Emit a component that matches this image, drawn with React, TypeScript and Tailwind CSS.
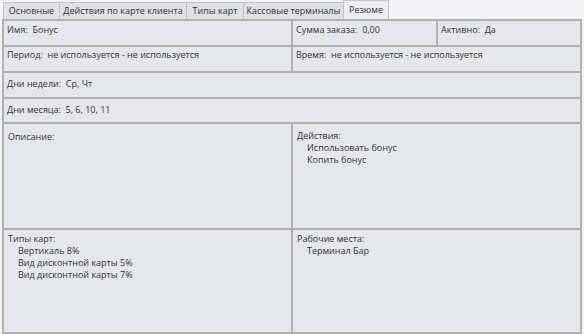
import React from 'react';

const font = { fontFamily: '"Open Sans", "Noto Sans", "DejaVu Sans", sans-serif' };

const tabs = [
  { label: 'Основные', w: 'w-[57px]' },
  { label: 'Действия по карте клиента', w: 'w-[128px]' },
  { label: 'Типы карт', w: 'w-[58px]' },
  { label: 'Кассовые терминалы', w: 'w-[101px]' },
  { label: 'Резюме', w: 'w-[46px]', active: true },
];

const Field = ({ label, value }: { label: string; value: string }) => (
  <span>
    {label}:&nbsp; {value}
  </span>
);

const ListBlock = ({ title, items, top }: { title: string; items: string[]; top: string }) => (
  <div className={`px-[4px] ${top} leading-[12px]`}>
    <div>{title}:</div>
    {items.map((it) => (
      <div key={it} className="pl-[10px]">
        {it}
      </div>
    ))}
  </div>
);

export default function App() {
  return (
    <div
      className="w-[584px] h-[334px] bg-[#f4f4f6] text-[9px] leading-[12px] text-[#333] overflow-hidden"
      style={font}
    >
      {/* tabs */}
      <div className="flex h-[19px] pl-[3px] items-end">
        {tabs.map((t) => (
          <div
            key={t.label}
            className={`${t.w} flex items-center justify-center whitespace-nowrap border border-b-0 border-[#c3c3c3] -ml-px first:ml-0 ${
              t.active ? 'h-[19px] bg-[#eceef2]' : 'h-[17px] bg-[#e0e1e5]'
            }`}
          >
            {t.label}
          </div>
        ))}
      </div>

      {/* summary grid */}
      <div className="ml-[2px] w-[580px] h-[315px] bg-[#b1b1b3] p-[2px] flex flex-col gap-[2px]">
        <div className="flex gap-[2px] h-[24px]">
          <div className="w-[287px] bg-[#e6e7ec] px-[3px] pt-[3px]">
            <Field label="Имя" value="Бонус" />
          </div>
          <div className="w-[143px] bg-[#e6e7ec] px-[3px] pt-[3px]">
            <Field label="Сумма заказа" value="0,00" />
          </div>
          <div className="flex-1 bg-[#e6e7ec] px-[3px] pt-[3px]">
            <Field label="Активно" value="Да" />
          </div>
        </div>
        <div className="flex gap-[2px] h-[24px]">
          <div className="w-[287px] bg-[#e6e7ec] px-[3px] pt-[2px]">
            <Field label="Период" value="не используется - не используется" />
          </div>
          <div className="flex-1 bg-[#e6e7ec] px-[3px] pt-[2px]">
            <Field label="Время" value="не используется - не используется" />
          </div>
        </div>
        <div className="h-[24px] bg-[#e6e7ec] px-[3px] pt-[5px]">
          <Field label="Дни недели" value="Ср, Чт" />
        </div>
        <div className="h-[23px] bg-[#e6e7ec] px-[3px] pt-[5px]">
          <Field label="Дни месяца" value="5, 6, 10, 11" />
        </div>
        <div className="flex gap-[2px] h-[104px]">
          <div className="w-[287px] bg-[#e6e7ec]">
            <div className="px-[4px] pt-[7px]">Описание:</div>
          </div>
          <div className="flex-1 bg-[#e6e7ec]">
            <ListBlock top="pt-[6px]" title="Действия" items={['Использовать бонус', 'Копить бонус']} />
          </div>
        </div>
        <div className="flex gap-[2px] flex-1">
          <div className="w-[287px] bg-[#e6e7ec]">
            <ListBlock
              top="pt-[3px]"
              title="Типы карт"
              items={['Вертикаль 8%', 'Вид дисконтной карты 5%', 'Вид дисконтной карты 7%']}
            />
          </div>
          <div className="flex-1 bg-[#e6e7ec]">
            <ListBlock top="pt-[3px]" title="Рабочие места" items={['Терминал Бар']} />
          </div>
        </div>
      </div>
    </div>
  );
}
